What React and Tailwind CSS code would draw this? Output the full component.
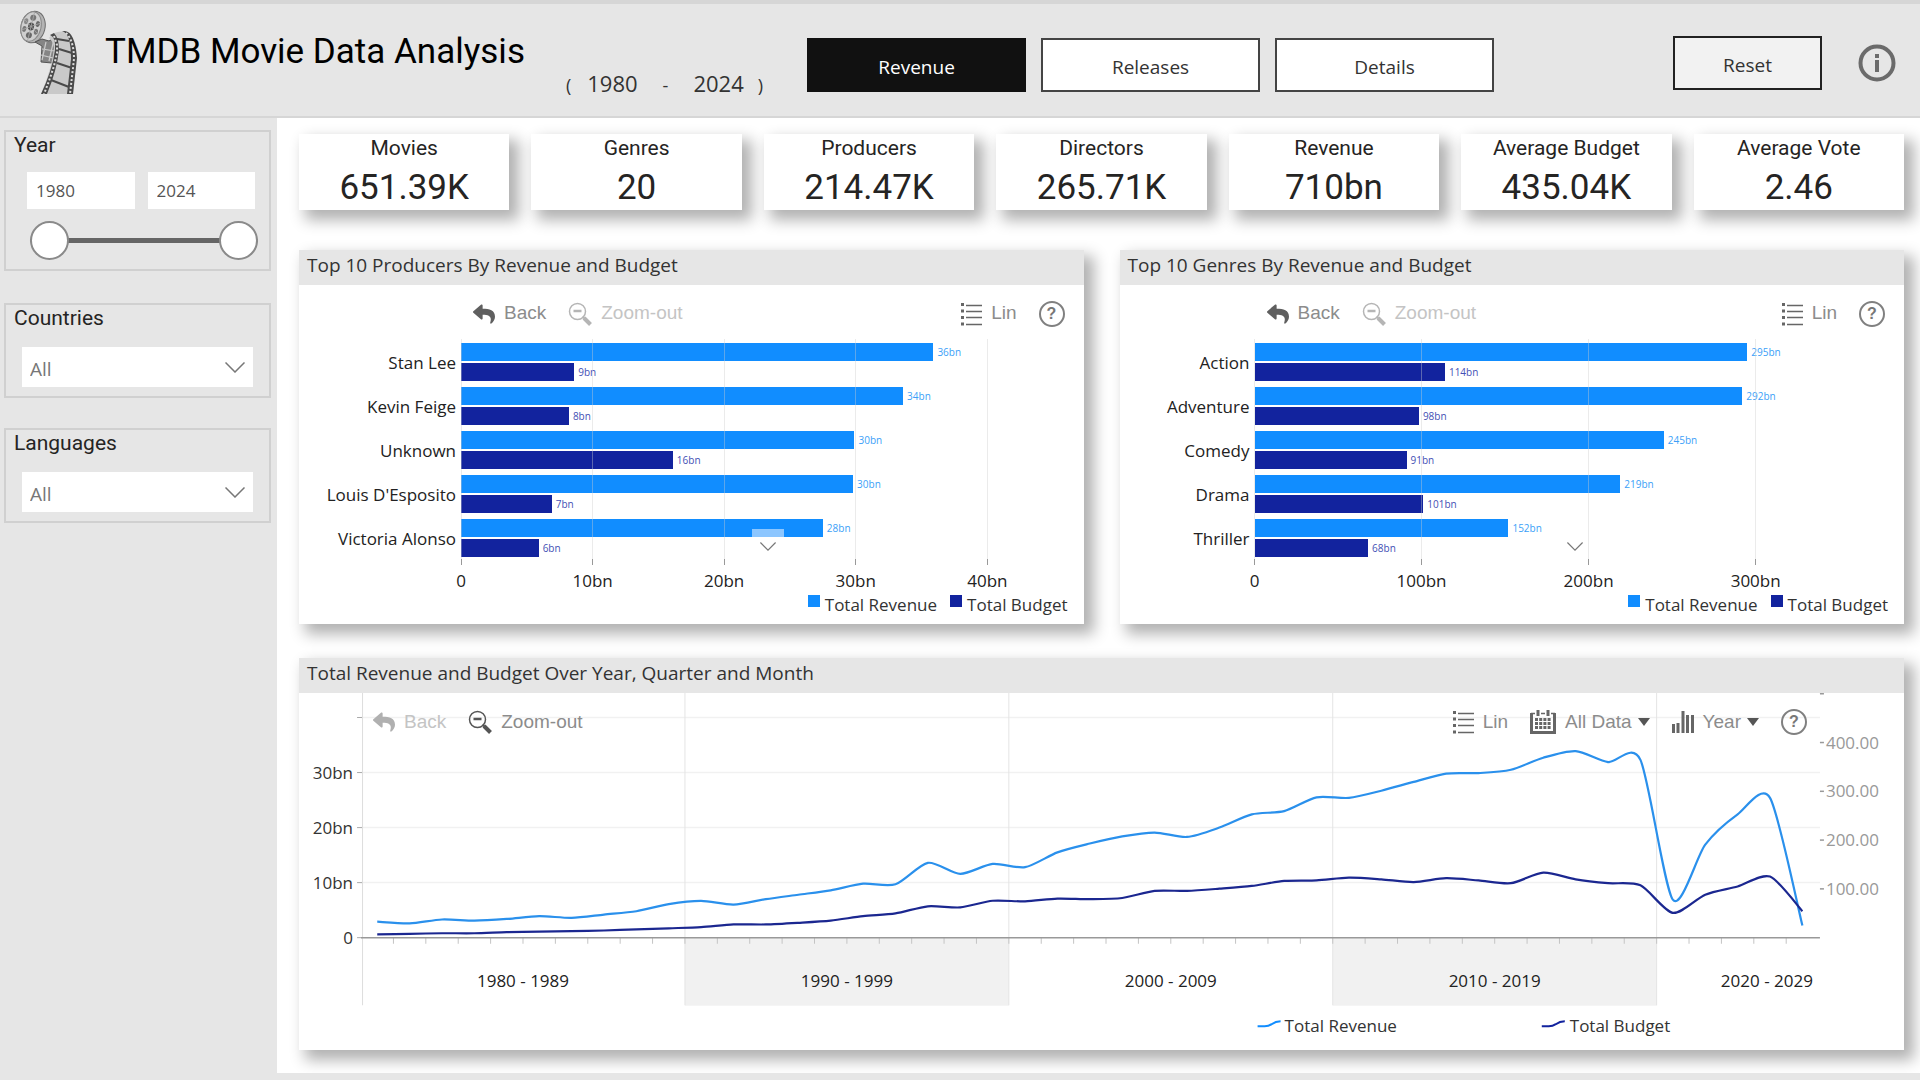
// src/App.jsx
import { useState } from 'react'
import { FaReply } from 'react-icons/fa'

/**
 * ================================================================
 * DASHBOARD TMDB - REVENUE PAGE
 * ================================================================
 */

const KPIS = [
  { label: 'Movies', value: '651.39K' },
  { label: 'Genres', value: '20' },
  { label: 'Producers', value: '214.47K' },
  { label: 'Directors', value: '265.71K' },
  { label: 'Revenue', value: '710bn' },
  { label: 'Average Budget', value: '435.04K' },
  { label: 'Average Vote', value: '2.46' },
]

// revenue / budget = bar length in bn, labels are rounded
const PRODUCERS = [
  { name: 'Stan Lee', revenue: 35.9, budget: 8.6 },
  { name: 'Kevin Feige', revenue: 33.6, budget: 8.2 },
  { name: 'Unknown', revenue: 29.9, budget: 16.1 },
  { name: "Louis D'Esposito", revenue: 29.8, budget: 6.9 },
  { name: 'Victoria Alonso', revenue: 27.5, budget: 5.9 },
]

const GENRES = [
  { name: 'Action', revenue: 295, budget: 114 },
  { name: 'Adventure', revenue: 292, budget: 98.4 },
  { name: 'Comedy', revenue: 245, budget: 91 },
  { name: 'Drama', revenue: 219, budget: 101 },
  { name: 'Thriller', revenue: 152, budget: 68 },
]

// One value per year, 1980 -> 2024, in bn
const REVENUE = [
  2.9, 2.6, 3.3, 3.1, 3.4, 3.9, 3.6, 4.2, 4.8, 6.1,
  6.7, 6.0, 7.0, 7.8, 8.6, 9.8, 9.7, 13.6, 11.6, 13.4,
  12.8, 15.5, 17.1, 18.4, 19.1, 18.3, 20.0, 22.4, 23.0, 25.5,
  25.4, 26.7, 28.3, 29.8, 29.9, 30.5, 32.7, 33.9, 31.9, 32.3,
  6.9, 16.9, 22.4, 25.4, 2.2,
]
const BUDGET = [
  0.6, 0.7, 0.8, 0.8, 1.0, 1.1, 1.2, 1.3, 1.5, 1.7,
  1.9, 2.4, 2.4, 2.7, 3.1, 3.9, 4.4, 5.7, 5.5, 6.7,
  6.6, 7.1, 7.0, 7.2, 8.5, 8.5, 8.9, 9.4, 10.3, 10.4,
  10.9, 10.6, 10.1, 10.8, 10.4, 9.9, 11.8, 10.6, 9.9, 9.5,
  4.5, 7.8, 9.3, 11.1, 4.8,
]

/* ── Icons ─────────────────────────────────────────────────── */

function FilmLogo() {
  return (
    <svg viewBox="0 0 64 88" className="h-[88px] w-16 shrink-0" aria-hidden="true">
      {/* reel */}
      <g transform="rotate(14 17 19)">
        <ellipse cx="17" cy="19" rx="12" ry="16" fill="#b4b4b4" stroke="#6d6d6d" />
        <ellipse cx="15" cy="19" rx="10" ry="15" fill="#cfcfcf" stroke="#8a8a8a" />
        <ellipse cx="15" cy="10" rx="3" ry="3" fill="#777" />
        <ellipse cx="21" cy="15" rx="2" ry="3" fill="#686868" />
        <ellipse cx="21" cy="23" rx="2" ry="3" fill="#777" />
        <ellipse cx="15" cy="28" rx="3" ry="3" fill="#686868" />
        <ellipse cx="9" cy="23" rx="2" ry="3" fill="#777" />
        <ellipse cx="9" cy="15" rx="2" ry="3" fill="#888" />
        <ellipse cx="15" cy="19" rx="3" ry="4" fill="#4d4d4d" />
        <path d="M15 5v28M6 13l18 12M6 25l18-12" stroke="#a5a5a5" strokeWidth="0.8" />
      </g>
      {/* short end of the film */}
      <path d="M19 34l7-3 7 2 12-7 5 3-9 8-5 18-11-1 1-16z" fill="#858585" stroke="#555" />
      <path d="M30 34l-4 18M38 31l-5 22M26 41l13 2M25 47l12 3" stroke="#ccc" strokeWidth="1.2" />
      {/* long strip */}
      <path d="M33 30q6-8 16-6 11 3 11 30l-3 32H25q11-26 13-46-1-7-5-10z" fill="#c9c9c9" />
      <path d="M34 27q6 2 5 15-3 21-14 44h6q10-24 12-44 0-12-5-17z" fill="#4a4a4a" />
      <path d="M46 23q9 2 9 28l-4 35h6l4-36q-2-26-12-27z" fill="#4a4a4a" />
      <path d="M38 28l3 9 0 8-3 13-5 15-5 13" fill="none" stroke="#ddd" strokeWidth="2" strokeDasharray="2 2" />
      <path d="M50 25q8 8 8 26l-4 35" fill="none" stroke="#ddd" strokeWidth="2" strokeDasharray="2 2" />
      <path d="M41 31l12 2M43 41l13 4M41 55l15 5M35 72l18 7" stroke="#4a4a4a" strokeWidth="2" />
    </svg>
  )
}

function InfoIcon() {
  return (
    <svg viewBox="0 0 38 38" className="size-[38px]" fill="none" stroke="#6b6b6b" aria-hidden="true">
      <circle cx="19" cy="19" r="16.5" strokeWidth="4" />
      <path d="M19 16v12M19 10v4" strokeWidth="4" />
    </svg>
  )
}

function ZoomOutIcon() {
  return (
    <svg viewBox="0 0 24 24" className="size-6" fill="none" stroke="currentColor" aria-hidden="true">
      <circle cx="9.5" cy="9.5" r="8" strokeWidth="1.5" />
      <path d="M5.5 9h8" strokeWidth="2.5" />
      <path d="M14.5 14.5l2 2" strokeWidth="2" />
      <path d="M16 16l6.5 6.5" strokeWidth="4" />
    </svg>
  )
}

function ListIcon() {
  return (
    <svg viewBox="0 0 21 24" className="h-6 w-[21px]" stroke="#666" aria-hidden="true">
      <path d="M0 2.5h3M0 9h3M0 15.5h3M0 22h3" strokeWidth="3" />
      <path d="M5 3.5h16M5 9.5h16M5 15.5h16M5 22.5h16" strokeWidth="1.5" />
    </svg>
  )
}

function CalendarIcon() {
  return (
    <svg viewBox="0 0 26 26" className="size-[26px]" stroke="#666" fill="none" aria-hidden="true">
      <path d="M1.5 4v19.5h23V4" strokeWidth="3" />
      <path d="M8 1v6M18 1v6" strokeWidth="3" />
      <path d="M5 10.5h16M5 14.5h16M5 18.5h16" strokeWidth="3" strokeDasharray="3 1.2" />
      <path d="M1 4.5h4M11 4.5h4M21 4.5h4" strokeWidth="1.5" />
    </svg>
  )
}

function ColumnsIcon() {
  return (
    <svg viewBox="0 0 22 24" className="h-6 w-[22px]" stroke="#666" strokeWidth="3" aria-hidden="true">
      <path d="M1.5 23v-9M6 23V13M11 23V1M15.5 23V5M20.5 23V5" />
    </svg>
  )
}

function Caret() {
  return (
    <svg viewBox="0 0 12 8" className="h-2 w-3" fill="#555" aria-hidden="true">
      <path d="M0 0h12L6 8z" />
    </svg>
  )
}

function Chevron({ className }) {
  return (
    <svg viewBox="0 0 20 11" className={className} fill="none" stroke="#777" strokeWidth="1.5" aria-hidden="true">
      <path d="M0.5 0.5L10 10l9.5-9.5" />
    </svg>
  )
}

/* ── Chart toolbar ─────────────────────────────────────────── */

function ToolButton({ icon, children, disabled }) {
  return (
    <button type="button" disabled={disabled}
      className="flex items-center gap-[9px] font-['Liberation_Sans',sans-serif] text-[19px] text-[#8c8c8c] disabled:text-[#c4c4c4]">
      {icon}
      <span>{children}</span>
    </button>
  )
}

function BackAndZoom({ backDisabled, zoomDisabled }) {
  return (
    <div className="flex items-center gap-[22px]">
      <ToolButton disabled={backDisabled} icon={<FaReply size={22} color={backDisabled ? '#b0b0b0' : '#5f5f5f'} />}>Back</ToolButton>
      <ToolButton disabled={zoomDisabled} icon={<span className={zoomDisabled ? 'text-[#b5b5b5]' : 'text-[#555]'}><ZoomOutIcon /></span>}>Zoom-out</ToolButton>
    </div>
  )
}

function HelpButton() {
  return (
    <button type="button" aria-label="Help"
      className="flex size-[26px] items-center justify-center rounded-full border-2 border-[#808080] font-['Liberation_Sans',sans-serif] text-base leading-none font-bold text-[#777]">
      ?
    </button>
  )
}

/* ── Panels ────────────────────────────────────────────────── */

function Panel({ title, children }) {
  return (
    <section className="flex flex-col bg-white shadow-[8px_8px_14px_2px_rgba(0,0,0,0.31)]">
      <h2 className="h-[35px] bg-[#e6e6e6] pl-2 text-[19px] leading-[30px] text-[#333]">{title}</h2>
      {children}
    </section>
  )
}

function Bar({ value, max, color, textColor }) {
  return (
    <div className="flex h-[18px] items-center gap-1">
      <div className={`h-full ${color}`} style={{ width: `${(value / max) * 100}%` }} />
      <span className={`text-[10px] leading-none ${textColor}`}>{Math.round(value)}bn</span>
    </div>
  )
}

function BarPanel({ title, rows, max, ticks, labelWidth, scrollThumb }) {
  return (
    <Panel title={title}>
      <div className="flex h-[54px] items-center justify-between pt-[3px] pr-[19px]">
        <div className="flex">
          <div className={labelWidth} />
          <div className="pl-3"><BackAndZoom zoomDisabled /></div>
        </div>
        <div className="flex items-center gap-[22px]">
          <ToolButton icon={<ListIcon />}>Lin</ToolButton>
          <HelpButton />
        </div>
      </div>

      <div className="flex pr-2">
        <div className={`${labelWidth} shrink-0 pt-1 pr-[5px] text-right text-[17px] text-[#222]`}>
          {rows.map((row) => (
            <p key={row.name} className="h-11 leading-[39px]">{row.name}</p>
          ))}
        </div>
        <div className="relative flex-1 pt-1 pb-8">
          {rows.map((row) => (
            <div key={row.name} className="flex h-11 flex-col gap-[2px]">
              <Bar value={row.revenue} max={max} color="bg-[#118dff]" textColor="text-[#3c9ff8]" />
              <Bar value={row.budget} max={max} color="bg-[#12239e]" textColor="text-[#4450b5]" />
            </div>
          ))}
          {/* grid lines, ticks and axis labels */}
          {ticks.map((tick) => (
            <div key={tick} className="absolute inset-y-0 flex w-20 -translate-x-1/2 flex-col items-center"
              style={{ left: `${(tick / max) * 100}%` }}>
              <div className="h-[220px] w-px bg-[#ccc]/40" />
              <div className="h-[6px] w-px bg-[#999]" />
              <span className="pt-1 text-[17px] leading-6 text-[#222]">{tick === 0 ? '0' : `${tick}bn`}</span>
            </div>
          ))}
          {scrollThumb && <div className="absolute top-[190px] left-1/2 h-2 w-8 -translate-x-1/2 bg-[#8cc6ff]" />}
          <Chevron className="absolute top-[203px] left-1/2 h-[9px] w-4 -translate-x-1/2" />
        </div>
      </div>

      <div className="flex h-[29px] items-start justify-end gap-[13px] pr-4 text-[17px] leading-5 text-[#333]">
        <span className="flex gap-[5px]"><i className="size-3 bg-[#118dff]" />Total Revenue</span>
        <span className="flex gap-[5px]"><i className="size-3 bg-[#12239e]" />Total Budget</span>
      </div>
    </Panel>
  )
}

/* ── Line chart ────────────────────────────────────────────── */

const X0 = 62
const YEAR = 32.37
const Y0 = 244.5
const BN = 5.5

// Cardinal spline through the yearly values
function linePath(values) {
  const pts = values.map((v, i) => [X0 + YEAR * (i + 0.5), Y0 - v * BN])
  const k = 0.13
  let d = `M${pts[0][0]},${pts[0][1]}`
  for (let i = 0; i < pts.length - 1; i++) {
    const p0 = pts[i - 1] || pts[i]
    const p1 = pts[i]
    const p2 = pts[i + 1]
    const p3 = pts[i + 2] || p2
    d += ` C${p1[0] + (p2[0] - p0[0]) * k},${p1[1] + (p2[1] - p0[1]) * k}`
    d += ` ${p2[0] - (p3[0] - p1[0]) * k},${p2[1] - (p3[1] - p1[1]) * k} ${p2[0]},${p2[1]}`
  }
  return d
}

function LineChart() {
  const decades = [0, 1, 2, 3]
  return (
    <svg viewBox="0 0 1604 357" className="block w-full" fontSize="17" fill="#333" role="img" aria-label="Total revenue and budget by year">
      {/* decade bands under the axis */}
      <rect x={X0 + YEAR * 10} y={Y0} width={YEAR * 10} height="68" fill="#f1f1f1" />
      <rect x={X0 + YEAR * 30} y={Y0} width={YEAR * 10} height="68" fill="#f1f1f1" />

      {[10, 20, 30, 40].map((v) => (
        <path key={v} d={`M${X0} ${Y0 - v * BN}H1520`} stroke="#f1f1f1" strokeWidth="1.5" />
      ))}
      {[0, 10, 20, 30, 40].map((v) => (
        <path key={v} d={`M${X0 - 4} ${Y0 - v * BN}h5`} stroke="#aaa" />
      ))}
      {[0, 10, 20, 30].map((v) => (
        <text key={v} x="54" y={Y0 - v * BN + 6} textAnchor="end">{v === 0 ? '0' : `${v}bn`}</text>
      ))}

      <path d="M63.5 0V312" stroke="#ddd" />
      {decades.map((n) => (
        <path key={n} d={`M${X0 + YEAR * 10 * (n + 1)} 0V312`} stroke="#e4e4e4" />
      ))}
      {Array.from({ length: 44 }, (_, i) => i + 1).map((i) => (
        <path key={i} d={`M${X0 + YEAR * i} ${Y0}v6`} stroke="#c4c4c4" />
      ))}
      <path d={`M${X0} ${Y0}H1520`} stroke="#999" strokeWidth="1.5" />

      {decades.map((n) => (
        <text key={n} x={X0 + YEAR * (n * 10 + 5)} y="294" textAnchor="middle" fill="#222">
          {`${1980 + n * 10} - ${1989 + n * 10}`}
        </text>
      ))}
      <text x="1513" y="294" textAnchor="end" fill="#222">2020 - 2029</text>

      {/* right axis */}
      {[100, 200, 300, 400, 500].map((v) => (
        <path key={v} d={`M1520 ${Y0 - v * 0.4875}h4`} stroke="#999" strokeWidth="1.5" />
      ))}
      {[100, 200, 300, 400].map((v) => (
        <text key={v} x="1526" y={Y0 - v * 0.4875 + 6} fill="#999">{`${v}.00`}</text>
      ))}

      <path d={linePath(REVENUE)} fill="none" stroke="#2a90ec" strokeWidth="2.2" />
      <path d={linePath(BUDGET)} fill="none" stroke="#1b2790" strokeWidth="2.2" />

      {/* legend */}
      <path d="M958 333h7q4 0 7-2 4-3 9-3" fill="none" stroke="#118dff" strokeWidth="2" />
      <text x="985" y="339">Total Revenue</text>
      <path d="M1242 333h7q4 0 7-2 4-3 9-3" fill="none" stroke="#12239e" strokeWidth="2" />
      <text x="1270" y="339">Total Budget</text>
    </svg>
  )
}

function LinePanel() {
  return (
    <Panel title="Total Revenue and Budget Over Year, Quarter and Month">
      <div className="relative">
        <LineChart />
        <div className="absolute inset-x-0 top-0 flex h-[58px] items-center justify-between pr-[97px] pl-[74px]">
          <BackAndZoom backDisabled />
          <div className="flex items-center gap-[22px]">
            <ToolButton icon={<ListIcon />}>Lin</ToolButton>
            <ToolButton icon={<CalendarIcon />}><span className="flex items-center gap-[6px]">All Data <Caret /></span></ToolButton>
            <ToolButton icon={<ColumnsIcon />}><span className="flex items-center gap-[6px]">Year <Caret /></span></ToolButton>
            <HelpButton />
          </div>
        </div>
      </div>
    </Panel>
  )
}

/* ── Sidebar filters ───────────────────────────────────────── */

const thumb = 'pointer-events-none absolute inset-0 w-full appearance-none bg-transparent [&::-webkit-slider-thumb]:pointer-events-auto [&::-webkit-slider-thumb]:size-[39px] [&::-webkit-slider-thumb]:appearance-none [&::-webkit-slider-thumb]:rounded-full [&::-webkit-slider-thumb]:border-2 [&::-webkit-slider-thumb]:border-solid [&::-webkit-slider-thumb]:border-[#8a8a8a] [&::-webkit-slider-thumb]:bg-white'

function YearFilter({ from, to, setFrom, setTo }) {
  return (
    <fieldset className="h-[141px] border-2 border-[#d0d0d0] pl-2">
      <p className="font-[Roboto,sans-serif] text-[21px] leading-[26px] text-[#252423]">Year</p>
      <div className="mt-[14px] mr-[14px] ml-[13px] flex gap-[13px]">
        <input aria-label="From year" value={from} onChange={(e) => setFrom(e.target.value)}
          className="h-[37px] w-0 flex-1 bg-white pl-[9px] text-[17px] text-[#555]" />
        <input aria-label="To year" value={to} onChange={(e) => setTo(e.target.value)}
          className="h-[37px] w-0 flex-1 bg-white pl-[9px] text-[17px] text-[#555]" />
      </div>
      <div className="relative mt-3 mr-[11px] ml-4 flex h-[39px] items-center">
        <div className="h-[5px] w-full rounded bg-[#666]" />
        <input type="range" aria-label="Start of range" min="1980" max="2024" value={from} onChange={(e) => setFrom(e.target.value)} className={thumb} />
        <input type="range" aria-label="End of range" min="1980" max="2024" value={to} onChange={(e) => setTo(e.target.value)} className={thumb} />
      </div>
    </fieldset>
  )
}

function SelectFilter({ label }) {
  return (
    <div className="h-[95px] border-2 border-[#d0d0d0] pl-2">
      <label htmlFor={label} className="block font-[Roboto,sans-serif] text-[21px] leading-[26px] text-[#252423]">{label}</label>
      <div className="relative mt-4 mr-4 ml-2">
        <select id={label} className="h-10 w-full appearance-none bg-white pt-1 pl-2 text-[19px] text-[#777]">
          <option>All</option>
        </select>
        <Chevron className="pointer-events-none absolute top-[15px] right-2 h-[11px] w-5" />
      </div>
    </div>
  )
}

/* ── Page ──────────────────────────────────────────────────── */

const TABS = ['Revenue', 'Releases', 'Details']

export default function App() {
  const [tab, setTab] = useState('Revenue')
  const [from, setFrom] = useState('1980')
  const [to, setTo] = useState('2024')

  return (
    <div className="flex min-h-screen flex-col bg-[#e6e6e6] font-['Open_Sans',sans-serif]">
      <header className="flex h-[118px] items-start border-t-4 border-b-2 border-[#d6d6d6] pr-6 pl-4">
        <div className="flex pt-1"><FilmLogo /></div>
        <h1 className="ml-[25px] pt-7 font-[Roboto,sans-serif] text-[35px] leading-10 whitespace-nowrap text-black">TMDB Movie Data Analysis</h1>
        <p className="ml-[41px] flex items-baseline pt-[63px] text-[22px] leading-8 whitespace-nowrap text-[#333]">
          <span className="text-lg">(</span>
          <span className="ml-4">{from}</span>
          <span className="mx-[25px] text-lg">-</span>
          <span>{to}</span>
          <span className="ml-[14px] text-lg">)</span>
        </p>
        <nav className="ml-11 flex gap-[15px] pt-[34px]">
          {TABS.map((t) => (
            <button key={t} type="button" onClick={() => setTab(t)}
              className={`h-[54px] w-[219px] border-2 pt-1 text-[19px] ${t === tab ? 'border-[#111] bg-[#111] text-white' : 'border-[#444] bg-white text-[#333]'}`}>
              {t}
            </button>
          ))}
        </nav>
        <div className="ml-auto flex items-center gap-9 pt-8">
          <button type="button" onClick={() => { setFrom('1980'); setTo('2024') }}
            className="h-[54px] w-[149px] border-2 border-[#222] bg-[#f2f2f2] pt-1 text-[19px] text-[#333]">Reset</button>
          <button type="button" aria-label="Information"><InfoIcon /></button>
        </div>
      </header>

      <div className="flex flex-1 border-b-[7px] border-[#e6e6e6]">
        <aside className="flex w-[277px] shrink-0 flex-col pt-3 pr-[6px] pl-1">
          <YearFilter from={from} to={to} setFrom={setFrom} setTo={setTo} />
          <div className="mt-8 flex flex-col gap-[30px]">
            <SelectFilter label="Countries" />
            <SelectFilter label="Languages" />
          </div>
        </aside>

        <main className="min-w-0 flex-1 overflow-hidden bg-white pt-4 pr-4 pb-[23px] pl-[22px]">
          <div className="grid grid-cols-7 gap-[22px]">
            {KPIS.map((kpi) => (
              <div key={kpi.label} className="h-[76px] bg-white text-center font-[Roboto,sans-serif] text-[#252423] shadow-[8px_8px_14px_2px_rgba(0,0,0,0.31)]">
                <p className="text-[21px] leading-7">{kpi.label}</p>
                <p className="pt-[6px] text-[35px] leading-10">{kpi.value}</p>
              </div>
            ))}
          </div>

          <div className="mt-10 grid grid-cols-2 gap-9">
            <BarPanel title="Top 10 Producers By Revenue and Budget" rows={PRODUCERS} max={46.7}
              ticks={[0, 10, 20, 30, 40]} labelWidth="w-[162px]" scrollThumb />
            <BarPanel title="Top 10 Genres By Revenue and Budget" rows={GENRES} max={384}
              ticks={[0, 100, 200, 300]} labelWidth="w-[135px]" />
          </div>

          <div className="mt-[34px]"><LinePanel /></div>
        </main>
      </div>
    </div>
  )
}
